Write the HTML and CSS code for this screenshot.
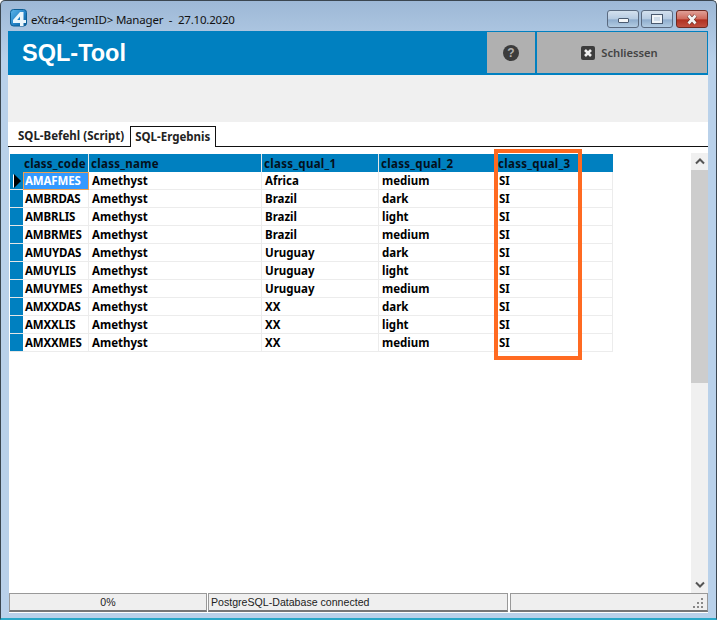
FILE: index.html
```html
<!DOCTYPE html>
<html lang="de">
<head>
<meta charset="utf-8">
<title>SQL-Tool</title>
<link rel="stylesheet" href="styles.css">
</head>
<body>
<div class="window">
  <div class="titlebar">
    <svg class="logo" width="18" height="18" viewBox="0 0 18 18">
      <defs><linearGradient id="lg" x1="0" y1="0" x2="1" y2="1"><stop offset="0" stop-color="#5fb6ea"/><stop offset="0.6" stop-color="#1f7fc4"/><stop offset="1" stop-color="#0d5c98"/></linearGradient></defs>
      <rect x="0.500" y="0.500" width="16" height="16.500" rx="3" fill="url(#lg)" stroke="#0b5d94"/>
      <path d="M10 3h3.500v8H16v3h-2.500v3H10v-3H3v-3z" fill="#eaf6fc"/>
      <path d="M10 7.500V11H7.200z" fill="#1f7fc4"/>
    </svg>
    <span class="title">eXtra4&lt;gemID&gt; Manager  -  27.10.2020</span>
    <div class="caption">
      <div class="capbtn"><span class="min-glyph"></span></div>
      <div class="capbtn"><span class="max-glyph"></span></div>
      <div class="capbtn close"><svg width="16" height="11" viewBox="0 0 16 11"><path d="M4.500 1.500L11.500 9.500M11.500 1.500L4.500 9.500" stroke="#5a2018" stroke-width="4" fill="none"/><path d="M4.500 1.500L11.500 9.500M11.500 1.500L4.500 9.500" stroke="#f4f4f4" stroke-width="2.800" fill="none"/></svg></div>
    </div>
  </div>
  <div class="client">
    <header class="banner">
      <h1>SQL-Tool</h1>
      <button class="tool help"><svg width="16" height="16" viewBox="0 0 16 16"><circle cx="8" cy="8" r="8" fill="#3c3c3c"/><text x="8" y="12" text-anchor="middle" class="qmark">?</text></svg></button>
      <button class="tool closer"><svg width="14" height="14" viewBox="0 0 14 14"><rect width="14" height="14" rx="2" fill="#3c3c3c"/><path d="M4 4l6 6M10 4l-6 6" stroke="#eee" stroke-width="2.600"/></svg><span>Schliessen</span></button>
    </header>
    <div class="toolbar"></div>
    <nav class="tabs">
      <span class="tab">SQL-Befehl (Script)</span>
      <span class="tab active">SQL-Ergebnis</span>
    </nav>
    <div class="gridarea">
      <table class="grid">
        <colgroup><col class="c0"><col class="c1"><col class="c2"><col class="c3"><col class="c4"><col class="c5"></colgroup>
        <thead><tr><th></th><th>class_code</th><th>class_name</th><th>class_qual_1</th><th>class_qual_2</th><th>class_qual_3</th></tr></thead>
        <tbody>
          <tr><td class="rh"><span class="pointer"></span></td><td class="sel">AMAFMES</td><td>Amethyst</td><td>Africa</td><td>medium</td><td>SI</td></tr>
          <tr><td class="rh"></td><td>AMBRDAS</td><td>Amethyst</td><td>Brazil</td><td>dark</td><td>SI</td></tr>
          <tr><td class="rh"></td><td>AMBRLIS</td><td>Amethyst</td><td>Brazil</td><td>light</td><td>SI</td></tr>
          <tr><td class="rh"></td><td>AMBRMES</td><td>Amethyst</td><td>Brazil</td><td>medium</td><td>SI</td></tr>
          <tr><td class="rh"></td><td>AMUYDAS</td><td>Amethyst</td><td>Uruguay</td><td>dark</td><td>SI</td></tr>
          <tr><td class="rh"></td><td>AMUYLIS</td><td>Amethyst</td><td>Uruguay</td><td>light</td><td>SI</td></tr>
          <tr><td class="rh"></td><td>AMUYMES</td><td>Amethyst</td><td>Uruguay</td><td>medium</td><td>SI</td></tr>
          <tr><td class="rh"></td><td>AMXXDAS</td><td>Amethyst</td><td>XX</td><td>dark</td><td>SI</td></tr>
          <tr><td class="rh"></td><td>AMXXLIS</td><td>Amethyst</td><td>XX</td><td>light</td><td>SI</td></tr>
          <tr><td class="rh"></td><td>AMXXMES</td><td>Amethyst</td><td>XX</td><td>medium</td><td>SI</td></tr>
        </tbody>
      </table>
      <div class="scrollbar">
        <div class="arrow"><svg width="10" height="7" viewBox="0 0 10 7"><path d="M1 5.500l4-4 4 4" stroke="#555" stroke-width="2" fill="none"/></svg></div>
        <div class="track"><div class="thumb"></div></div>
        <div class="arrow"><svg width="10" height="7" viewBox="0 0 10 7"><path d="M1 1.500l4 4 4-4" stroke="#555" stroke-width="2" fill="none"/></svg></div>
      </div>
      <div class="highlight"></div>
    </div>
    <footer class="status">
      <div class="panel progress">0%</div>
      <div class="panel message">PostgreSQL-Database connected</div>
      <div class="panel last"><svg width="11" height="11" viewBox="0 0 11 11" fill="#888"><rect x="8" y="0" width="2" height="2"/><rect x="8" y="4" width="2" height="2"/><rect x="4" y="4" width="2" height="2"/><rect x="8" y="8" width="2" height="2"/><rect x="4" y="8" width="2" height="2"/><rect x="0" y="8" width="2" height="2"/></svg></div>
    </footer>
  </div>
</div>
</body>
</html>
```
FILE: styles.css
```css
* { box-sizing: border-box; }
html, body { margin: 0; height: 100%; overflow: hidden; background: #fff; }
body { font-family: "DejaVu Sans", sans-serif; }
.window {
  width: 717px; height: 620px; display: flex; flex-direction: column;
  background: linear-gradient(#9db8d6 0, #b9d1ea 60px);
  border: 1px solid #3a4650; border-bottom: 2px solid #2aa8c8;
  border-radius: 5px 5px 0 0;
  padding: 0 8px 5px 7px;
}
.titlebar { height: 30px; flex: none; display: flex; align-items: center; position: relative; }
.logo { margin: 4px 0 0 2px; flex: none; }
.title { font-family: "Noto Sans", sans-serif; font-size: 11.500px; letter-spacing: -0.2px; margin: 6px 0 0 3px; color: #111; white-space: pre; }
.caption { margin: 0 0 0 auto; display: flex; gap: 2px; align-self: flex-start; padding-top: 9px; }
.capbtn {
  width: 32px; height: 18px; border: 1px solid #5a6a80; border-radius: 3px;
  background: linear-gradient(#d3e0ee 0, #b6cbe2 50%, #8fadcd 55%, #b2cbe2 100%);
  display: flex; align-items: center; justify-content: center;
}
.capbtn.close { background: linear-gradient(#e0a097 0, #cf6a5c 50%, #b03020 55%, #c05040 100%); border-color: #6e2a22; margin-left: 1px; }
.min-glyph { width: 11px; height: 5px; background: #f4f6f8; border: 1px solid #4a5a70; border-radius: 1px; margin-top: 3px; }
.max-glyph { width: 10px; height: 8px; background: #cfdcea; border: 2px solid #f0f4f8; outline: 1px solid #4a5a70; }
.client { flex: 1; min-height: 0; background: #fff; display: flex; flex-direction: column; }
.banner { height: 44px; flex: none; background: #0080c0; display: flex; align-items: stretch; padding: 1px 1px 2px 0; }
.banner h1 { margin: 0 auto 0 14px; line-height: 42px; color: #fff; font-family: "Liberation Sans", sans-serif; font-weight: 700; font-size: 23.500px; }
.tool { border: 0; padding: 0; background: #b0b0b0; display: flex; align-items: center; justify-content: center; font-family: "Noto Sans", sans-serif; font-size: 11.200px; font-weight: 600; color: #444; }
.help { width: 48px; margin-right: 2px; }
.closer { width: 170px; gap: 6px; padding-right: 5px; }
.qmark { font: 700 12px "Liberation Sans", sans-serif; fill: #b0b0b0; }
.toolbar { height: 47px; flex: none; background: #f0f0f0; }
.tabs { height: 25px; flex: none; display: flex; align-items: flex-end; padding-left: 4px; border-bottom: 1px solid #111; font-family: "Noto Sans", sans-serif; font-size: 11.500px; font-weight: 700; color: #222; }
.tab { padding: 0 6px 0 6px; height: 19px; line-height: 18px; white-space: nowrap; }
.tab.active { border: 1px solid #111; border-bottom: 0; margin-bottom: -1px; height: 21px; background: #fff; padding: 0 5px 0 4px; line-height: 20px; }
.gridarea { flex: 1; min-height: 0; position: relative; display: flex; justify-content: space-between; align-items: stretch; padding: 7px 0 0 1px; border-left: 1px solid #b9d1ea; }
.grid { table-layout: fixed; width: 603px; border-collapse: separate; border-spacing: 0; align-self: flex-start; font-family: "Noto Sans", sans-serif; font-size: 11.500px; font-weight: 700; color: #000; }
.c0 { width: 13px; } .c1 { width: 66px; } .c2 { width: 173px; } .c3 { width: 117px; } .c4 { width: 117px; } .c5 { width: 117px; }
.grid th { height: 18px; background: #0080c0; color: #04101c; text-align: left; padding: 0 0 0 2px; border-right: 1px solid #e6e6e6; font-weight: 700; letter-spacing: 0.3px; white-space: nowrap; overflow: hidden; }
.grid th:nth-child(2) { padding-left: 1px; letter-spacing: 0.2px; }
.grid th:first-child, .grid th:last-child { border-right: 1px solid #0080c0; }
.grid td { height: 18px; padding: 0 0 0 3px; border-right: 1px solid #ececec; border-bottom: 1px solid #ececec; white-space: nowrap; overflow: hidden; }
.grid td:nth-child(2) { padding-left: 2px; letter-spacing: -0.15px; }
.grid td.rh { background: #0080c0; padding: 0; border-right: 0; border-bottom: 1px solid #e6e6e6; }
.grid td.sel { background: #3399ff; color: #fff; outline: 1px solid #f0a050; outline-offset: -1px; }
.pointer { display: block; width: 0; height: 0; margin-left: 4px; border-left: 7px solid #000; border-top: 7px solid transparent; border-bottom: 7px solid transparent; filter: drop-shadow(-1px 0 0 #fff); }
.scrollbar { width: 17px; flex: none; display: flex; flex-direction: column; background: #f0f0f0; margin-top: -1px; }
.arrow { height: 17px; flex: none; display: flex; align-items: center; justify-content: center; }
.track { flex: 1; }
.thumb { height: 213px; background: #cdcdcd; }
.highlight { position: absolute; left: 485px; top: 2px; width: 88px; height: 211px; border: 4px solid #ff6a21; }
.status { height: 20px; flex: none; display: flex; font-family: "Liberation Sans", sans-serif; font-size: 10.600px; color: #222; border-left: 1px solid #b9d1ea; background: #fff; }
.panel { border: 1px solid #999; border-bottom: 2px solid #777; height: 19px; background: #efefef; line-height: 16px; }
.progress { width: 198px; text-align: center; }
.message { width: 300px; margin-left: 1px; padding-left: 2px; }
.last { flex: 1; margin: 0 0 0 2px; display: flex; justify-content: flex-end; align-items: flex-end; padding: 0 3px 1px 0; }
```
